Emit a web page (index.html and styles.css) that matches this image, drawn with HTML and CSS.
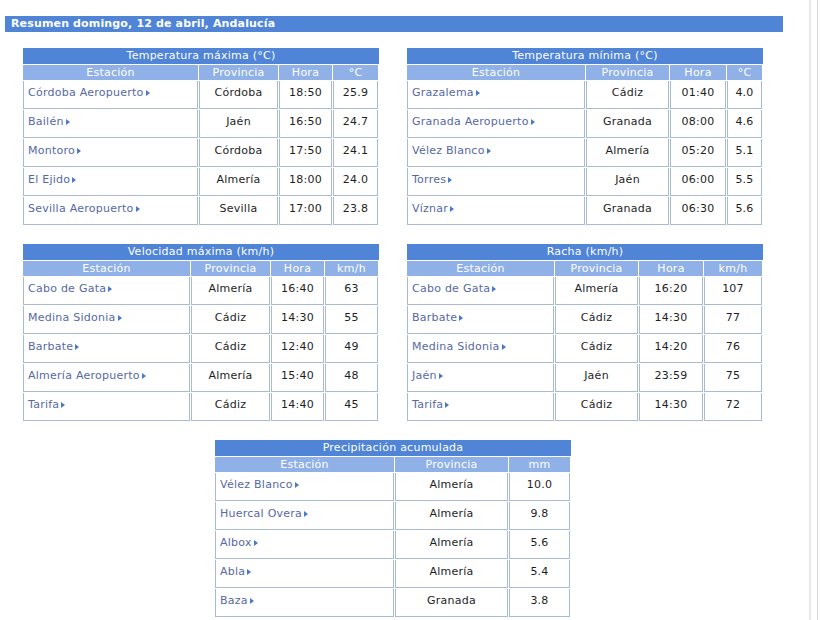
FILE: index.html
```html
<!DOCTYPE html>
<html lang="es">
<head>
<meta charset="utf-8">
<title>Resumen Andalucía</title>
<link rel="stylesheet" href="styles.css">
</head>
<body>
<div class="frame">
<div class="page">
  <div class="topbar">Resumen domingo, 12 de abril, Andalucía</div>
  <div class="sections">

    <section class="block">
      <div class="title">Temperatura máxima (°C)</div>
      <div class="grid t-max">
        <div class="th">Estación</div><div class="th">Provincia</div><div class="th">Hora</div><div class="th">°C</div>
        <div class="td st"><a href="#">Córdoba Aeropuerto</a><span class="arr"></span></div><div class="td">Córdoba</div><div class="td">18:50</div><div class="td">25.9</div>
        <div class="td st"><a href="#">Bailén</a><span class="arr"></span></div><div class="td">Jaén</div><div class="td">16:50</div><div class="td">24.7</div>
        <div class="td st"><a href="#">Montoro</a><span class="arr"></span></div><div class="td">Córdoba</div><div class="td">17:50</div><div class="td">24.1</div>
        <div class="td st"><a href="#">El Ejido</a><span class="arr"></span></div><div class="td">Almería</div><div class="td">18:00</div><div class="td">24.0</div>
        <div class="td st"><a href="#">Sevilla Aeropuerto</a><span class="arr"></span></div><div class="td">Sevilla</div><div class="td">17:00</div><div class="td">23.8</div>
      </div>
    </section>

    <section class="block">
      <div class="title">Temperatura mínima (°C)</div>
      <div class="grid t-min">
        <div class="th">Estación</div><div class="th">Provincia</div><div class="th">Hora</div><div class="th">°C</div>
        <div class="td st"><a href="#">Grazalema</a><span class="arr"></span></div><div class="td">Cádiz</div><div class="td">01:40</div><div class="td">4.0</div>
        <div class="td st"><a href="#">Granada Aeropuerto</a><span class="arr"></span></div><div class="td">Granada</div><div class="td">08:00</div><div class="td">4.6</div>
        <div class="td st"><a href="#">Vélez Blanco</a><span class="arr"></span></div><div class="td">Almería</div><div class="td">05:20</div><div class="td">5.1</div>
        <div class="td st"><a href="#">Torres</a><span class="arr"></span></div><div class="td">Jaén</div><div class="td">06:00</div><div class="td">5.5</div>
        <div class="td st"><a href="#">Víznar</a><span class="arr"></span></div><div class="td">Granada</div><div class="td">06:30</div><div class="td">5.6</div>
      </div>
    </section>

    <section class="block">
      <div class="title">Velocidad máxima (km/h)</div>
      <div class="grid t-vel">
        <div class="th">Estación</div><div class="th">Provincia</div><div class="th">Hora</div><div class="th">km/h</div>
        <div class="td st"><a href="#">Cabo de Gata</a><span class="arr"></span></div><div class="td">Almería</div><div class="td">16:40</div><div class="td">63</div>
        <div class="td st"><a href="#">Medina Sidonia</a><span class="arr"></span></div><div class="td">Cádiz</div><div class="td">14:30</div><div class="td">55</div>
        <div class="td st"><a href="#">Barbate</a><span class="arr"></span></div><div class="td">Cádiz</div><div class="td">12:40</div><div class="td">49</div>
        <div class="td st"><a href="#">Almería Aeropuerto</a><span class="arr"></span></div><div class="td">Almería</div><div class="td">15:40</div><div class="td">48</div>
        <div class="td st"><a href="#">Tarifa</a><span class="arr"></span></div><div class="td">Cádiz</div><div class="td">14:40</div><div class="td">45</div>
      </div>
    </section>

    <section class="block">
      <div class="title">Racha (km/h)</div>
      <div class="grid t-racha">
        <div class="th">Estación</div><div class="th">Provincia</div><div class="th">Hora</div><div class="th">km/h</div>
        <div class="td st"><a href="#">Cabo de Gata</a><span class="arr"></span></div><div class="td">Almería</div><div class="td">16:20</div><div class="td">107</div>
        <div class="td st"><a href="#">Barbate</a><span class="arr"></span></div><div class="td">Cádiz</div><div class="td">14:30</div><div class="td">77</div>
        <div class="td st"><a href="#">Medina Sidonia</a><span class="arr"></span></div><div class="td">Cádiz</div><div class="td">14:20</div><div class="td">76</div>
        <div class="td st"><a href="#">Jaén</a><span class="arr"></span></div><div class="td">Jaén</div><div class="td">23:59</div><div class="td">75</div>
        <div class="td st"><a href="#">Tarifa</a><span class="arr"></span></div><div class="td">Cádiz</div><div class="td">14:30</div><div class="td">72</div>
      </div>
    </section>

    <section class="block wide">
      <div class="title">Precipitación acumulada</div>
      <div class="grid t-prec">
        <div class="th">Estación</div><div class="th">Provincia</div><div class="th">mm</div>
        <div class="td st"><a href="#">Vélez Blanco</a><span class="arr"></span></div><div class="td">Almería</div><div class="td">10.0</div>
        <div class="td st"><a href="#">Huercal Overa</a><span class="arr"></span></div><div class="td">Almería</div><div class="td">9.8</div>
        <div class="td st"><a href="#">Albox</a><span class="arr"></span></div><div class="td">Almería</div><div class="td">5.6</div>
        <div class="td st"><a href="#">Abla</a><span class="arr"></span></div><div class="td">Almería</div><div class="td">5.4</div>
        <div class="td st"><a href="#">Baza</a><span class="arr"></span></div><div class="td">Granada</div><div class="td">3.8</div>
      </div>
    </section>

  </div>
</div>
</div>
</body>
</html>
```

FILE: styles.css
```css
html, body {
  margin: 0;
  padding: 0;
  background: #ffffff;
  overflow: hidden;
}
body {
  font-family: "DejaVu Sans", Verdana, sans-serif;
  font-size: 11px;
  letter-spacing: 0.25px;
  color: #1e1e1e;
}
.frame {
  width: 817px;
  height: 620px;
  border-right: 1px solid #d3d9e0;
}
.page {
  width: 811px;
  height: 620px;
  padding-left: 5px;
  padding-top: 16px;
  box-sizing: border-box;
  border-right: 2px solid #e6eaef;
}
.topbar {
  width: 778px;
  height: 16px;
  line-height: 16px;
  box-sizing: border-box;
  padding-left: 6px;
  background: #4f84d7;
  color: #ffffff;
  font-weight: bold;
  font-size: 11px;
  letter-spacing: 0.15px;
}
.sections {
  width: 778px;
  margin-top: 16px;
  padding-left: 18px;
  box-sizing: border-box;
  display: grid;
  grid-template-columns: 357px 357px;
  column-gap: 27px;
  row-gap: 19px;
  align-items: start;
}
.block.wide {
  grid-column: 1 / -1;
  justify-self: start;
  margin-left: 192px;
  width: 357px;
}
.title {
  width: 356px;
  height: 16px;
  line-height: 16px;
  background: #4f84d7;
  color: #ffffff;
  text-align: center;
  margin-bottom: 1px;
}
.grid {
  display: grid;
  width: 355px;
  column-gap: 1px;
  row-gap: 1px;
}
.t-max { grid-template-columns: 175px 79px 53px 45px; }
.t-min { grid-template-columns: 178px 83px 56px 35px; }
.t-vel { grid-template-columns: 167px 79px 53px 53px; }
.t-racha { grid-template-columns: 147px 83px 64px 58px; }
.t-prec { grid-template-columns: 179px 113px 61px; }
.th {
  height: 15px;
  line-height: 15px;
  background: #8fb1e7;
  color: #ffffff;
  text-align: center;
}
.td {
  height: 28px;
  box-sizing: border-box;
  border-left: 1px solid #a9bad2;
  border-right: 1px solid #a9bad2;
  border-bottom: 1px solid #a9bad2;
  padding-top: 5px;
  line-height: 13px;
  text-align: center;
  white-space: nowrap;
}
.td.st {
  text-align: left;
  padding-left: 4px;
}
.td.st a {
  color: #5669a5;
  text-decoration: none;
}
.arr {
  display: inline-block;
  width: 0;
  height: 0;
  margin-left: 2px;
  border-left: 4px solid #4a78cc;
  border-top: 3.5px solid transparent;
  border-bottom: 3.5px solid transparent;
  vertical-align: 0px;
}
```
